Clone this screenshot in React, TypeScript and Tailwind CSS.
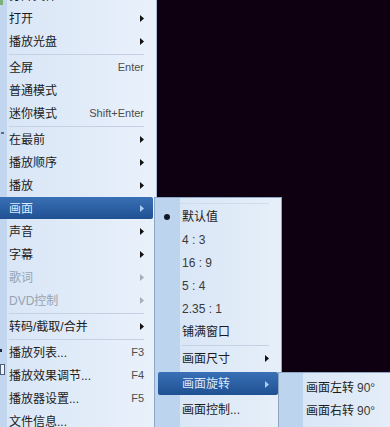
import React from "react";

const Arrow = ({ color = "#111" }: { color?: string }) => (
  <svg width="4" height="7" viewBox="0 0 4 7" className="shrink-0">
    <polygon points="0,0 4,3.5 0,7" fill={color} />
  </svg>
);

type Item =
  | { sep: true }
  | {
      sep?: false;
      label: string;
      shortcut?: string;
      arrow?: boolean;
      disabled?: boolean;
      active?: boolean;
    };

const mainItems: Item[] = [
  { label: "打开文件..." },
  { label: "打开", arrow: true },
  { label: "播放光盘", arrow: true },
  { sep: true },
  { label: "全屏", shortcut: "Enter" },
  { label: "普通模式" },
  { label: "迷你模式", shortcut: "Shift+Enter" },
  { sep: true },
  { label: "在最前", arrow: true },
  { label: "播放顺序", arrow: true },
  { label: "播放", arrow: true },
  { label: "画面", arrow: true, active: true },
  { label: "声音", arrow: true },
  { label: "字幕", arrow: true },
  { label: "歌词", arrow: true, disabled: true },
  { label: "DVD控制", arrow: true, disabled: true },
  { sep: true },
  { label: "转码/截取/合并", arrow: true },
  { sep: true },
  { label: "播放列表...", shortcut: "F3" },
  { label: "播放效果调节...", shortcut: "F4" },
  { label: "播放器设置...", shortcut: "F5" },
  { label: "文件信息..." },
];

function MainRow({ item }: { item: Item }) {
  if (item.sep) {
    return (
      <div className="h-[3px] flex items-center pl-[28px] pr-[12px]">
        <div className="w-full h-px bg-[#c3d1e3]" />
      </div>
    );
  }
  const color = item.disabled ? "text-[#97a3b2]" : item.active ? "text-[#dbe9fb]" : "text-[#1b1b1b]";
  return (
    <div className="h-[23px] relative">
      {item.active && (
        <div className="absolute left-[2px] right-[3px] top-0 bottom-[1px] rounded-[2px] bg-gradient-to-b from-[#3a70b6] to-[#1f5192]" />
      )}
      <div className={`relative h-full flex items-center pl-[28px] pr-[12px] ${color}`}>
        <span className="flex-1 text-[12px] whitespace-nowrap">{item.label}</span>
        {item.shortcut && (
          <span className="text-[11px] text-[#4d4d4d] whitespace-nowrap">{item.shortcut}</span>
        )}
        {item.arrow && (
          <Arrow color={item.disabled ? "#a3afbe" : item.active ? "#a9cdf2" : "#111"} />
        )}
      </div>
    </div>
  );
}

export default function App() {
  return (
    <div className="relative w-[390px] h-[427px] overflow-hidden bg-[#0e0010] font-['Liberation_Sans','Noto_Sans_CJK_SC',sans-serif]">
      {/* main menu */}
      <div className="ml-[-19px] mt-[-16px] w-[176px] flex flex-col border-r border-[#a8bdd6] bg-[linear-gradient(to_right,#c2d7ef_0px,#c2d7ef_26px,#d9e6f6_26px,#e9f1fb_100%)]">
        {mainItems.map((it, i) => (
          <MainRow key={i} item={it} />
        ))}
      </div>

      {/* little icon fragments in left strip */}
      <div className="absolute left-0 top-0 w-[3px] h-[5px] bg-[#7db07a]" />
      <div className="absolute left-[1px] top-[132px] w-[3px] h-[2px] bg-[#5a6b80]" />
      <div className="absolute left-0 top-[349px] w-[2px] h-[3px] bg-[#1c2a3c]" />
      <div className="absolute left-0 top-[364px] w-[5px] h-[11px] border border-[#4c5e78] bg-[#eef3f9]" />

      {/* submenu 1 */}
      <div className="absolute left-[154px] top-[197px] w-[128px] h-[240px] border border-[#8da6c4] bg-[linear-gradient(to_right,#bcd4ee_0px,#bcd4ee_25px,#d9e6f6_25px,#e6eff9_100%)] flex flex-col">
        <div className="h-[7px] flex items-end pl-[25px] pr-[12px]">
          <div className="w-full h-px bg-[#cfdcec] mb-[1px]" />
        </div>
        <div className="h-[23px] relative flex items-center pl-[27px] pr-[12px] text-[12px] text-[#1b1b1b]">
          <div className="absolute left-[9px] top-[9px] w-[6px] h-[6px] rounded-full bg-[#111a26]" />
          默认值
        </div>
        {["4 : 3", "16 : 9", "5 : 4", "2.35 : 1"].map((r) => (
          <div key={r} className="h-[23px] flex items-center pl-[27px] text-[12px] text-[#3a3a3a] whitespace-pre">
            {r}
          </div>
        ))}
        <div className="h-[23px] flex items-center pl-[27px] text-[12px] text-[#1b1b1b]">铺满窗口</div>
        <div className="h-[4px] flex items-center pl-[27px] pr-[12px]">
          <div className="w-full h-px bg-[#c3d1e3]" />
        </div>
        <div className="h-[23px] flex items-center pl-[27px] pr-[12px] text-[12px] text-[#1b1b1b]">
          <span className="flex-1">画面尺寸</span>
          <Arrow />
        </div>
        <div className="h-[26px] relative">
          <div className="absolute left-[3px] right-[3px] top-[2px] bottom-[1px] rounded-[2px] bg-gradient-to-b from-[#3a70b6] to-[#1f5192]" />
          <div className="relative h-full flex items-center pt-[2px] pl-[27px] pr-[12px] text-[12px] text-[#dbe9fb]">
            <span className="flex-1">画面旋转</span>
            <Arrow color="#a9cdf2" />
          </div>
        </div>
        <div className="h-[26px] flex items-center pt-[2px] pl-[27px] text-[12px] text-[#1b1b1b]">画面控制...</div>
      </div>

      {/* submenu 2 */}
      <div className="absolute left-[278px] top-[372px] w-[130px] h-[70px] border border-[#8da6c4] bg-[linear-gradient(to_right,#bcd4ee_0px,#bcd4ee_24px,#d9e6f6_24px,#e6eff9_100%)] flex flex-col pt-[3px]">
        <div className="h-[23px] flex items-center pl-[27px] text-[12px] text-[#1b1b1b] whitespace-nowrap">
          画面左转<span className="ml-[3px] text-[12px] text-[#3a3a3a]">90°</span>
        </div>
        <div className="h-[23px] flex items-center pl-[27px] text-[12px] text-[#1b1b1b] whitespace-nowrap">
          画面右转<span className="ml-[3px] text-[12px] text-[#3a3a3a]">90°</span>
        </div>
      </div>
    </div>
  );
}
